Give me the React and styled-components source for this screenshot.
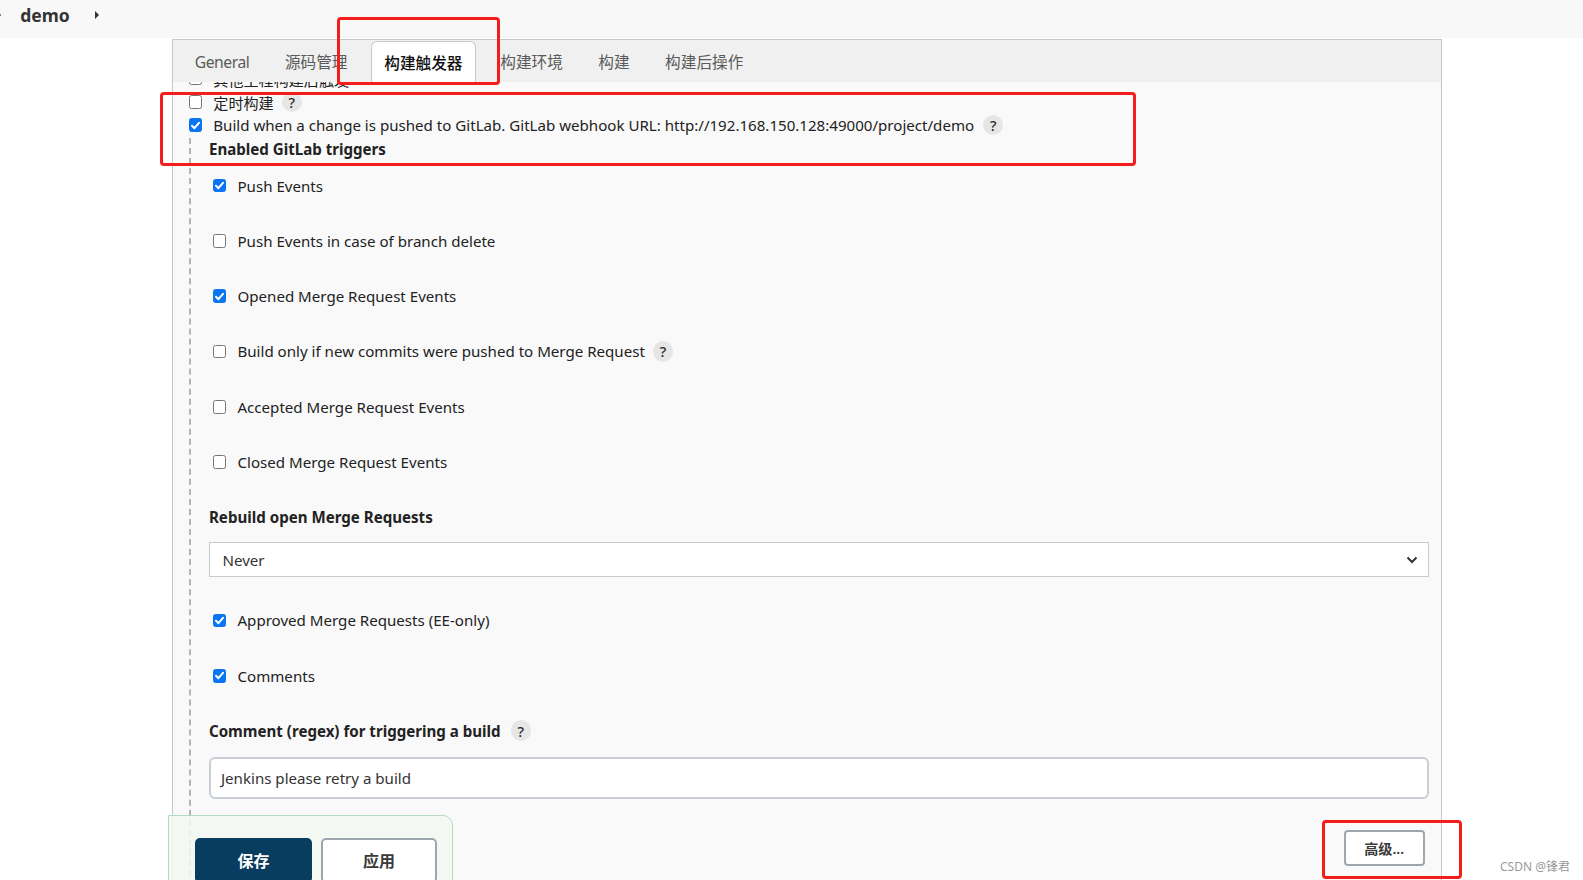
import React from 'react';
import styled, { createGlobalStyle } from 'styled-components';

const GlobalStyle = createGlobalStyle`
  body {
    margin: 0;
    background: #fff;
    font-family: "Noto Sans", "Noto Sans CJK SC", sans-serif;
    color: #333;
    overflow: hidden;
  }
`;

const Page = styled.div`
  position: relative;
  width: 1583px;
  height: 880px;
  overflow: hidden;
`;

const TopBar = styled.div`
  height: 38.4px;
  box-sizing: border-box;
  background: #f8f8f8;
  display: flex;
  align-items: center;
  padding: 0 0 8px 20.2px;
  position: relative;
`;

const Crumb = styled.span`
  font-size: 17.5px;
  font-weight: 700;
  color: #333;
  margin-right: 25px;
`;

const Caret = styled.span`
  width: 0;
  height: 0;
  border-top: 4px solid transparent;
  border-bottom: 4px solid transparent;
  border-left: ${p => p.$size || 4}px solid #333;
  ${p => p.$edge && 'position: absolute; left: -2px; top: 11px;'}
`;

const Panel = styled.div`
  margin: 1px 0 0 171.6px;
  width: 1270px;
  box-sizing: border-box;
  border: 1px solid #c4c8cc;
  border-bottom: none;
  background: #f9f9f9;
  height: 900px;
`;

const TabBar = styled.div`
  height: 41.5px;
  background: #f0f0f0;
  display: flex;
  gap: 11.3px;
  padding-left: 10px;
  align-items: stretch;
`;

const Tab = styled.div`
  padding: 0 ${p => (p.$active ? '12.4px' : '11.1px')};
  display: flex;
  align-items: center;
  font-size: 15.65px;
  letter-spacing: ${p => (p.$latin ? '-0.42px' : '0')};
  color: ${p => (p.$active ? '#111' : '#5a5a5a')};
  font-weight: ${p => (p.$active ? 500 : 400)};
  background: ${p => (p.$active ? '#fff' : 'transparent')};
  border: 1px solid ${p => (p.$active ? '#c8c8c8' : 'transparent')};
  border-bottom: none;
  border-radius: 6px 6px 0 0;
  margin-top: ${p => (p.$active ? '1px' : '0')};
  margin-right: ${p => (p.$active ? '1px' : '0')};
`;

const Content = styled.div`
  overflow: hidden;
  padding: 0 12.1px 0 16.2px;
`;

const Row = styled.div`
  height: 23.2px;
  display: flex;
  align-items: center;
  font-size: 15.1px;
  color: #222;
  margin-top: ${p => p.$offset || 0}px;
`;

const Box = styled.span`
  width: 13.5px;
  height: 13.5px;
  box-sizing: border-box;
  border-radius: 2.5px;
  flex: none;
  margin-right: 11px;
  display: inline-flex;
  align-items: center;
  justify-content: center;
  background: ${p => (p.$on ? '#0a75f0' : '#fff')};
  border: 1px solid ${p => (p.$on ? '#0a75f0' : '#767676')};
`;

const Help = styled.span`
  width: 20.2px;
  height: 20.2px;
  border-radius: 50%;
  background: #e6e6e6;
  color: #2a2a2a;
  font-size: 14.5px;
  font-weight: 500;
  display: inline-flex;
  align-items: center;
  justify-content: center;
  margin-left: ${p => p.$gap || 8}px;
`;

const Nested = styled.div`
  margin-top: 1px;
  border-left: 2px dashed #b4b4b4;
  padding: 0 0 60px 18.2px;
  display: flex;
  flex-direction: column;
`;

const SectionTitle = styled.div`
  height: 23.2px;
  display: flex;
  align-items: center;
  font-size: 15.1px;
  font-weight: 700;
  color: #222;
  margin-bottom: ${p => p.$after || 13.7}px;
`;

const TriggerRow = styled(Row)`
  height: 22.2px;
  padding-left: 4px;
  margin-bottom: ${p => p.$after ?? 33.1}px;
`;

const SelectBox = styled.div`
  height: 35.3px;
  box-sizing: border-box;
  border: 1px solid #c4cbd1;
  background: #fff;
  display: flex;
  align-items: center;
  justify-content: space-between;
  padding: 2px 10px 0 12.5px;
  font-size: 15.1px;
  color: #333;
  margin-bottom: 32.3px;
`;

const TextInput = styled.div`
  height: 42.4px;
  box-sizing: border-box;
  border: 2px solid #c8ced3;
  border-radius: 6px;
  background: #fff;
  display: flex;
  align-items: center;
  padding: 1px 10px 0;
  font-size: 15.1px;
  color: #333;
`;

const AdvancedRow = styled.div`
  display: flex;
  justify-content: flex-end;
  padding: 31.3px 4px 0 0;
`;

const Button = styled.button`
  font-family: inherit;
  box-sizing: border-box;
  width: ${p => p.$w}px;
  height: ${p => p.$h}px;
  border-radius: ${p => p.$r || 5}px;
  font-size: ${p => p.$fs || 16}px;
  font-weight: ${p => (p.$primary ? 700 : 600)};
  color: ${p => (p.$primary ? '#fff' : '#3a3a3a')};
  background: ${p => (p.$primary ? '#093d5f' : '#fff')};
  border: 2px solid ${p => (p.$primary ? '#093d5f' : '#9ea7ae')};
  display: inline-flex;
  align-items: center;
  justify-content: center;
  padding: 0;
`;

const BottomBar = styled.div`
  position: absolute;
  left: 167.6px;
  top: 814.7px;
  width: 285.7px;
  height: 90px;
  box-sizing: border-box;
  background: rgba(243, 247, 240, 0.88);
  border: 1px solid #b4dbc2;
  border-radius: 0 10px 0 0;
  display: flex;
  align-items: flex-start;
  gap: 9px;
  padding: 22.3px 0 0 26.3px;
`;

const Mark = styled.div`
  position: absolute;
  left: ${p => p.$x}px;
  top: ${p => p.$y}px;
  width: ${p => p.$w}px;
  height: ${p => p.$h}px;
  box-sizing: border-box;
  border: 3px solid #f51c1c;
  border-radius: 4px;
  pointer-events: none;
`;

const Watermark = styled.div`
  position: absolute;
  left: 1500px;
  top: 857px;
  font-size: 12px;
  color: #9a9a9a;
`;

const Check = ({ on }) => (
  <Box $on={on}>
    {on && (
      <svg width="11" height="11" viewBox="0 0 11 11">
        <polyline points="2,5.8 4.4,8.2 9,2.8" fill="none" stroke="#fff" strokeWidth="2" strokeLinecap="round" strokeLinejoin="round" />
      </svg>
    )}
  </Box>
);

const tabs = ['General', '源码管理', '构建触发器', '构建环境', '构建', '构建后操作'];

const triggers = [
  { label: 'Push Events', on: true },
  { label: 'Push Events in case of branch delete', on: false },
  { label: 'Opened Merge Request Events', on: true },
  { label: 'Build only if new commits were pushed to Merge Request', on: false, help: true },
  { label: 'Accepted Merge Request Events', on: false },
  { label: 'Closed Merge Request Events', on: false },
];

export default function App() {
  return (
    <Page>
      <GlobalStyle />
      <TopBar>
        <Caret $edge $size={3} />
        <Crumb>demo</Crumb>
        <Caret $size={4} />
      </TopBar>
      <Panel>
        <TabBar>
          {tabs.map((t, i) => (
            <Tab key={t} $active={i === 2} $latin={i === 0}>{t}</Tab>
          ))}
        </TabBar>
        <Content>
          <Row $offset={-14.8}>
            <Check />
            其他工程构建后触发
          </Row>
          <Row>
            <Check />
            定时构建
            <Help>?</Help>
          </Row>
          <Row>
            <Check on />
            Build when a change is pushed to GitLab. GitLab webhook URL: http://192.168.150.128:49000/project/demo
            <Help $gap={9}>?</Help>
          </Row>
          <Nested>
            <SectionTitle>Enabled GitLab triggers</SectionTitle>
            {triggers.map((t, i) => (
              <TriggerRow key={t.label} $after={i === triggers.length - 1 ? 31.8 : 33.1}>
                <Check on={t.on} />
                {t.label}
                {t.help && <Help>?</Help>}
              </TriggerRow>
            ))}
            <SectionTitle>Rebuild open Merge Requests</SectionTitle>
            <SelectBox>
              Never
              <svg width="12" height="8" viewBox="0 0 12 8">
                <polyline points="1.5,1.5 6,6 10.5,1.5" fill="none" stroke="#333" strokeWidth="2" />
              </svg>
            </SelectBox>
            <TriggerRow $after={33.3}>
              <Check on />
              Approved Merge Requests (EE-only)
            </TriggerRow>
            <TriggerRow $after={31.9}>
              <Check on />
              Comments
            </TriggerRow>
            <SectionTitle $after={14.6}>
              Comment (regex) for triggering a build
              <Help $gap={10}>?</Help>
            </SectionTitle>
            <TextInput>Jenkins please retry a build</TextInput>
            <AdvancedRow>
              <Button $w={80.7} $h={35.3} $r={4} $fs={14.1}>高级...</Button>
            </AdvancedRow>
          </Nested>
        </Content>
      </Panel>
      <BottomBar>
        <Button $primary $w={117} $h={45}>保存</Button>
        <Button $w={116} $h={45}>应用</Button>
      </BottomBar>
      <Mark $x={337.2} $y={17.2} $w={162.5} $h={67.6} />
      <Mark $x={159.5} $y={91.9} $w={976.3} $h={73.7} />
      <Mark $x={1321.5} $y={819.8} $w={140.3} $h={59.6} />
      <Watermark>CSDN @锋君</Watermark>
    </Page>
  );
}
